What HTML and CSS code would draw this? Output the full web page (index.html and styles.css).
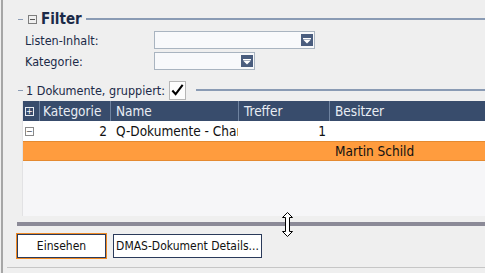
FILE: index.html
```html
<!DOCTYPE html>
<html lang="de">
<head>
    <meta charset="UTF-8">
    <title>DMAS - Filter</title>
    <link rel="stylesheet" href="styles.css">
</head>
<body>
    <div class="frame">
        <div class="inner">
            <div class="legend">
                <span class="dash"></span>
                <span class="toggle"><span class="toggle-bar"></span></span>
                <span class="legend-title">Filter</span>
                <span class="line"></span>
            </div>

            <div class="form-row">
                <label>Listen-Inhalt:</label>
                <div class="select select-wide"><span class="drop"><svg width="12" height="12" viewBox="0 0 12 12"><rect x="2" y="4" width="8" height="1" fill="#fff"/><path d="M2 5.5h8L6 9.5z" fill="#fff"/></svg></span></div>
            </div>
            <div class="form-row">
                <label>Kategorie:</label>
                <div class="select select-small"><span class="drop"><svg width="12" height="12" viewBox="0 0 12 12"><rect x="2" y="4" width="8" height="1" fill="#fff"/><path d="M2 5.5h8L6 9.5z" fill="#fff"/></svg></span></div>
            </div>

            <div class="legend legend-docs">
                <span class="dash"></span>
                <span class="legend-text">1 Dokumente, gruppiert:</span>
                <span class="check"><svg width="16" height="16" viewBox="0 0 16 16"><path d="M2.5 8.5l3.5 4 7.5-10" fill="none" stroke="#000" stroke-width="2.2"/></svg></span>
                <span class="line"></span>
            </div>

            <div class="grid">
                <div class="grid-row grid-head">
                    <div class="cell c-exp"><span class="box box-head">+</span></div>
                    <div class="cell c-kat">Kategorie</div>
                    <div class="cell c-name">Name</div>
                    <div class="cell c-tref">Treffer</div>
                    <div class="cell c-bes">Besitzer</div>
                </div>
                <div class="grid-row grid-group">
                    <div class="cell c-exp"><span class="box box-row">−</span></div>
                    <div class="cell c-kat num">2</div>
                    <div class="cell c-name">Q-Dokumente - Change Requests</div>
                    <div class="cell c-tref num">1</div>
                    <div class="cell c-bes"></div>
                </div>
                <div class="grid-row grid-sel">
                    <div class="cell c-exp"></div>
                    <div class="cell c-kat"></div>
                    <div class="cell c-name"></div>
                    <div class="cell c-tref"></div>
                    <div class="cell c-bes">Martin Schild</div>
                </div>
            </div>

            <div class="splitter"></div>

            <div class="buttons">
                <button class="btn btn-default">Einsehen</button>
                <button class="btn btn-details">DMAS-Dokument Details...</button>
            </div>
        </div>
    </div>

    <svg class="cursor" width="11" height="25" viewBox="0 0 11 25">
        <path d="M5.5 0.5L10.5 5.5H7.5V19.5H10.5L5.5 24.5L0.5 19.5H3.5V5.5H0.5Z" fill="#fff" stroke="#000" stroke-width="1"/>
    </svg>
</body>
</html>
```

FILE: styles.css
```css
body {
    margin: 0;
    background-color: #efefef;
    font-family: "DejaVu Sans Condensed", "DejaVu Sans", sans-serif;
    font-size: 12.5px;
    color: #1b2a48;
    overflow: hidden;
}

.frame {
    height: 273px;
    margin-left: 1px;
    border-left: 2px solid #a6a6a6;
}

.inner {
    height: 268px;
    margin-left: 4px;
    padding: 8px 0 0 10px;
    box-sizing: border-box;
    border-bottom: 1px solid #c6c6c6;
}

.legend {
    display: flex;
    align-items: center;
    height: 22px;
    padding-left: 1px;
}

.dash {
    width: 5px;
    height: 1px;
    background-color: #8a9bb4;
}

.line {
    flex: 1;
    height: 2px;
    background-color: #8a9bb4;
}

.toggle {
    width: 9px;
    height: 9px;
    margin: 0 4px 0 5px;
    border: 1px solid #7d7d7d;
    box-sizing: border-box;
    display: flex;
    align-items: center;
    justify-content: center;
}

.toggle-bar {
    width: 5px;
    height: 1px;
    background-color: #555;
}

.legend-title {
    font-size: 15px;
    font-weight: bold;
    margin-right: 4px;
}

.form-row {
    display: flex;
    align-items: center;
    height: 18px;
    margin-top: 1px;
    padding-left: 8px;
}

.form-row + .form-row {
    margin-top: 3px;
}

.form-row label {
    width: 129px;
}

.select {
    height: 18px;
    border: 1px solid #a9b4c0;
    background-color: #f8f9fb;
    box-sizing: border-box;
    display: flex;
    justify-content: flex-end;
    align-items: center;
    padding-right: 1px;
}

.select-wide {
    width: 161px;
}

.select-small {
    width: 101px;
}

.drop {
    width: 12px;
    height: 12px;
    background-color: #4a5d7e;
    display: flex;
}

.legend-docs {
    margin-top: 9px;
}

.legend-text {
    width: 143px;
    margin-left: 3px;
}

.check {
    width: 17px;
    height: 19px;
    border: 1px solid #b6b6b6;
    background-color: #fdfdfd;
    box-sizing: border-box;
    display: flex;
    align-items: center;
    justify-content: center;
    margin-right: 10px;
}

.grid {
    height: 115px;
    margin-left: 5px;
    border-left: 1px solid #e2e2e4;
    background-color: #f6f6f8;
    overflow: hidden;
    font-size: 13.5px;
}

.grid-row {
    display: flex;
    height: 20px;
    align-items: stretch;
    white-space: nowrap;
}

.cell {
    overflow: hidden;
    display: flex;
    align-items: center;
    padding-left: 5px;
    box-sizing: border-box;
    border-left: 1px solid transparent;
}

.c-exp {
    width: 16px;
    padding-left: 2px;
    border-left: none;
}

.c-kat {
    width: 71px;
    padding-left: 3px;
}

.c-name {
    width: 128px;
}

.c-tref {
    width: 91px;
}

.c-bes {
    flex: 1;
}

.num {
    justify-content: flex-end;
    padding-right: 3px;
}

.grid-head {
    background-color: #384c6c;
    color: #e8edf4;
}

.grid-head .cell + .cell {
    border-left-color: #6f83a0;
}

.grid-head .c-bes {
    border-left-color: #d6dde6;
}

.grid-group {
    background-color: #fff;
    color: #111;
}

.grid-sel {
    background-color: #ff9c3e;
    border-top: 1px solid #e58a30;
    border-bottom: 1px solid #e58a30;
    box-sizing: border-box;
    color: #111;
}

.box {
    width: 9px;
    height: 9px;
    box-sizing: border-box;
    display: flex;
    align-items: center;
    justify-content: center;
    font-size: 9px;
    line-height: 1;
}

.box-head {
    border: 1px solid #e8edf4;
    color: #fff;
}

.box-row {
    border: 1px solid #8a8a8a;
    color: #555;
}

.splitter {
    height: 4px;
    margin-top: 6px;
    background-color: #8b8a97;
}

.buttons {
    display: flex;
    gap: 7px;
    margin-top: 8px;
}

.btn {
    height: 24px;
    background-color: #fff;
    border: 1px solid #2a3a5a;
    font-family: inherit;
    font-size: 12px;
    color: #111;
    padding: 0;
    white-space: nowrap;
}

.btn-default {
    width: 89px;
    box-shadow: 0 0 0 1px #f08a24;
}

.btn-details {
    width: 149px;
}

.cursor {
    position: absolute;
    left: 282px;
    top: 212px;
}
```
